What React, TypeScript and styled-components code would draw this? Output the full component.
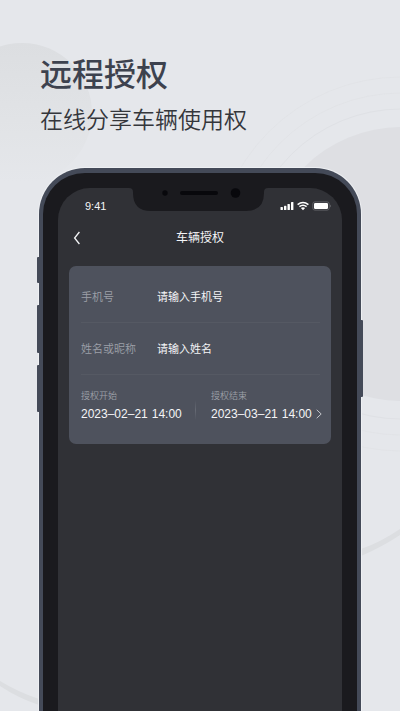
import React from "react";
import styled, { createGlobalStyle } from "styled-components";

const GlobalStyle = createGlobalStyle`
  * { box-sizing: border-box; }
  body {
    margin: 0;
    background: #e5e7eb;
    font-family: "Liberation Sans", "Noto Sans CJK SC", sans-serif;
  }
  button, input { font: inherit; color: inherit; }
`;

const Page = styled.main`
  position: relative;
  min-height: 100vh;
  overflow: hidden;
  display: flex;
  flex-direction: column;
`;

const Backdrop = styled.svg`
  position: absolute;
  inset: 0;
  width: 100%;
  height: 100%;
`;

const Intro = styled.header`
  position: relative;
  padding: 48px 40px 0;
  height: 168px;
  font-family: "Noto Sans CJK SC", sans-serif;
`;

const Title = styled.h1`
  margin: 0;
  font-size: 32px;
  line-height: 48px;
  font-weight: 500;
  color: #3d424e;
`;

const Subtitle = styled.p`
  margin: 4px 0 0;
  font-size: 23px;
  line-height: 36px;
  font-weight: 350;
  color: #34363b;
`;

const Phone = styled.section`
  position: relative;
  flex: 1;
  display: flex;
  margin: 0 39px;
  padding: 15px 15px 0;
  border: solid #444a58;
  border-width: 5px 4px 0;
  border-radius: 46px 46px 0 0;
  background: #1a1a1e;
  box-shadow: 0 0 0 1px #eef0f3;
`;

const SideKey = styled.span<{ $side: "left" | "right"; $top: number; $height: number }>`
  position: absolute;
  ${(p) => p.$side}: -6px;
  top: ${(p) => p.$top}px;
  width: 3px;
  height: ${(p) => p.$height}px;
  background: #444a58;
  border-radius: ${(p) => (p.$side === "left" ? "1px 0 0 1px" : "0 1px 1px 0")};
`;

const Screen = styled.div`
  flex: 1;
  min-width: 0;
  background: #303136;
  border-radius: 32px 32px 0 0;
  color: #f4f5f7;
`;

const Notch = styled.svg`
  position: absolute;
  top: 14px;
  left: 50%;
  width: 142px;
  height: 26px;
  margin-left: -71px;
`;

const StatusBar = styled.div`
  display: flex;
  align-items: center;
  justify-content: space-between;
  height: 34px;
  padding: 1px 10px 0 27px;
  font-size: 11px;
`;

const NavBar = styled.nav`
  display: grid;
  grid-template-columns: 38px 1fr 38px;
  align-items: center;
  height: 32px;
`;

const BackButton = styled.button`
  display: flex;
  justify-content: center;
  padding: 0;
  border: 0;
  background: none;
`;

const NavTitle = styled.h2`
  margin: 0;
  text-align: center;
  font-size: 12px;
  line-height: 18px;
  font-weight: 400;
`;

const Card = styled.form`
  margin: 12px 11px 0;
  padding: 5px 11px 0 12px;
  height: 178px;
  border-radius: 7px;
  background: #4e525d;
`;

const Row = styled.div`
  display: grid;
  grid-template-columns: 76px 1fr;
  align-items: center;
  height: 52px;
  border-bottom: 1px solid #555963;
`;

const Label = styled.label`
  font-size: 11px;
  line-height: 16px;
  font-weight: 350;
  color: #9da0a8;
`;

const TextInput = styled.input`
  width: 100%;
  min-width: 0;
  padding: 0;
  border: 0;
  outline: 0;
  background: none;
  font-size: 11px;
  line-height: 16px;
  &::placeholder {
    color: #f4f5f7;
    opacity: 1;
  }
`;

const Dates = styled.div`
  display: grid;
  grid-template-columns: 114px 1px 1fr;
  padding-top: 13px;
`;

const Divider = styled.span`
  height: 20px;
  margin-top: 12px;
  background: linear-gradient(#4e525d, #656973, #4e525d);
`;

const DateField = styled.div<{ $inset?: boolean }>`
  padding-left: ${(p) => (p.$inset ? 15 : 0)}px;
`;

const DateLabel = styled.label`
  display: block;
  font-size: 9px;
  line-height: 16px;
  font-weight: 350;
  color: #9da0a8;
`;

const DateButton = styled.button`
  display: flex;
  align-items: center;
  gap: 4px;
  padding: 1px 0 0;
  border: 0;
  background: none;
  font-size: 12px;
  line-height: 18px;
  white-space: nowrap;
`;

const DateTime = styled.span`
  display: flex;
  gap: 4px;
`;

export default function App() {
  return (
    <Page>
      <GlobalStyle />
      <Backdrop viewBox="0 0 400 711" preserveAspectRatio="xMidYMin slice" aria-hidden="true">
        <defs>
          <linearGradient id="orb" x1="0" y1="0" x2="0" y2="1">
            <stop offset="0" stopColor="#dcdee1" />
            <stop offset="0.55" stopColor="#e1e3e6" />
            <stop offset="1" stopColor="#e5e7eb" />
          </linearGradient>
        </defs>
        <circle cx="22" cy="113" r="70" fill="url(#orb)" />
        <circle cx="401" cy="264" r="137" fill="#dedfe3" />
        <g fill="none" stroke="#dfe1e5">
          <circle cx="401" cy="264" r="155" />
          <circle cx="401" cy="264" r="171" strokeOpacity="0.6" />
          <circle cx="401" cy="264" r="187" strokeOpacity="0.6" />
        </g>
        <path d="M0 681Q18 692 39 699V705Q18 698 0 686Z" fill="#dcdee1" />
        <path d="M361 549Q381 542 400 529V535Q382 547 361 556Z" fill="#dcdee1" />
      </Backdrop>
      <Intro>
        <Title>远程授权</Title>
        <Subtitle>在线分享车辆使用权</Subtitle>
      </Intro>
      <Phone>
        <SideKey $side="left" $top={84} $height={26} />
        <SideKey $side="left" $top={132} $height={48} />
        <SideKey $side="left" $top={192} $height={47} />
        <SideKey $side="right" $top={147} $height={77} />
        <Screen>
          <StatusBar>
            <span>9:41</span>
            <svg width="52" height="10" viewBox="0 0 52 10" aria-hidden="true">
              <g fill="#fff">
                <rect x="0.500" y="6" width="2.4" height="3" rx="0.6" />
                <rect x="4" y="4.8" width="2.4" height="4.2" rx="0.6" />
                <rect x="7.500" y="3" width="2.4" height="6" rx="0.6" />
                <rect x="11" y="1" width="2.4" height="8" rx="0.6" />
                <path d="M20.9 7.1Q23 5.6 25.1 7.1L23 9.2Z" />
                <rect x="34" y="2" width="14" height="6" rx="1.2" />
              </g>
              <g fill="none" stroke="#fff" strokeWidth="1.5">
                <path d="M17.6 3.7Q23 -.7 28.4 3.7" />
                <path d="M19.4 5.7Q23 2.8 26.6 5.7" />
              </g>
              <rect x="32.8" y="0.9" width="16.4" height="8.2" rx="2" fill="none" stroke="#6b6c71" strokeWidth="0.8" />
              <path d="M50.2 3.4Q51.6 5 50.2 6.6Z" fill="#85868a" />
            </svg>
          </StatusBar>
          <NavBar>
            <BackButton type="button" aria-label="返回">
              <svg width="8" height="14" viewBox="0 0 8 14" fill="none" stroke="#f4f5f7" strokeWidth="1.3">
                <path d="M6.4 1L1.6 7L6.4 13" />
              </svg>
            </BackButton>
            <NavTitle>车辆授权</NavTitle>
          </NavBar>
          <Card>
            <Row>
              <Label htmlFor="phone">手机号</Label>
              <TextInput id="phone" type="tel" placeholder="请输入手机号" />
            </Row>
            <Row>
              <Label htmlFor="name">姓名或昵称</Label>
              <TextInput id="name" type="text" placeholder="请输入姓名" />
            </Row>
            <Dates>
              <DateField>
                <DateLabel htmlFor="start">授权开始</DateLabel>
                <DateButton id="start" type="button">
                  <DateTime><span>2023–02–21</span><span>14:00</span></DateTime>
                </DateButton>
              </DateField>
              <Divider />
              <DateField $inset>
                <DateLabel htmlFor="end">授权结束</DateLabel>
                <DateButton id="end" type="button">
                  <DateTime><span>2023–03–21</span><span>14:00</span></DateTime>
                  <svg width="6" height="10" viewBox="0 0 6 10" fill="none" stroke="#c3c5ca" aria-hidden="true">
                    <path d="M0.7 0.8L5.2 5L0.7 9.2" />
                  </svg>
                </DateButton>
              </DateField>
            </Dates>
          </Card>
        </Screen>
        <Notch viewBox="0 0 142 26" aria-hidden="true">
          <path d="M0 0H139V1Q135 1 135 5V6Q135 24 117 24H22Q4 24 4 6V5Q4 1 0 1Z" fill="#1a1a1e" />
          <g fill="#08080c">
            <circle cx="36" cy="6" r="2.7" />
            <rect x="51" y="4" width="38" height="4" rx="2" />
            <circle cx="106.500" cy="6" r="4.800" />
          </g>
        </Notch>
      </Phone>
    </Page>
  );
}
